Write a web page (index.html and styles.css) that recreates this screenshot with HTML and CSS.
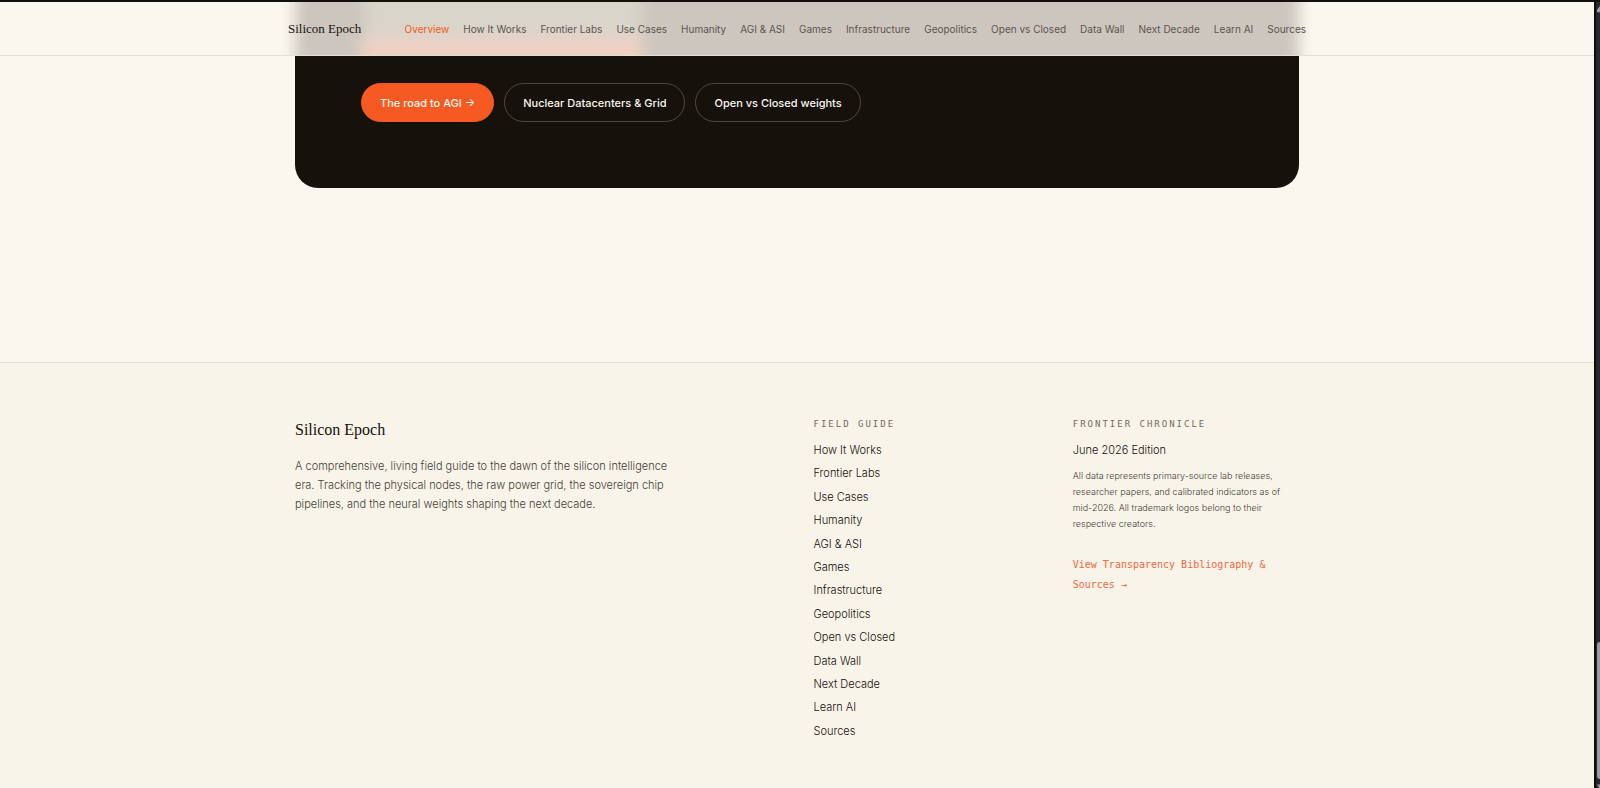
FILE: index.html
```html
<!DOCTYPE html>
<html lang="en">
<head>
<meta charset="utf-8">
<meta name="viewport" content="width=device-width, initial-scale=1">
<title>Silicon Epoch</title>
<link rel="stylesheet" href="styles.css">
</head>
<body>
<div class="window">
  <div class="page">
    <header class="site-header">
      <div class="haze" aria-hidden="true">
        <div class="glow-light"></div>
        <div class="glow-orange"></div>
      </div>
      <div class="header-inner">
        <a class="brand" href="#">Silicon Epoch</a>
        <nav class="site-nav" aria-label="Main">
          <a class="active" href="#">Overview</a>
          <a href="#">How It Works</a>
          <a href="#">Frontier Labs</a>
          <a href="#">Use Cases</a>
          <a href="#">Humanity</a>
          <a href="#">AGI &amp; ASI</a>
          <a href="#">Games</a>
          <a href="#">Infrastructure</a>
          <a href="#">Geopolitics</a>
          <a href="#">Open vs Closed</a>
          <a href="#">Data Wall</a>
          <a href="#">Next Decade</a>
          <a href="#">Learn AI</a>
          <a href="#">Sources</a>
        </nav>
      </div>
    </header>
    <main class="main">
      <section class="hero">
        <div class="actions">
          <a class="button primary" href="#">The road to AGI →</a>
          <a class="button" href="#">Nuclear Datacenters &amp; Grid</a>
          <a class="button" href="#">Open vs Closed weights</a>
        </div>
      </section>
    </main>
    <footer class="site-footer">
      <div class="footer-grid">
        <section class="about">
          <h2 class="footer-brand">Silicon Epoch</h2>
          <p class="about-text">A comprehensive, living field guide to the dawn of the silicon intelligence era. Tracking the physical nodes, the raw power grid, the sovereign chip pipelines, and the neural weights shaping the next decade.</p>
        </section>
        <nav aria-labelledby="guide-title">
          <h3 class="label" id="guide-title">FIELD GUIDE</h3>
          <ul class="guide">
            <li><a href="#">How It Works</a></li>
            <li><a href="#">Frontier Labs</a></li>
            <li><a href="#">Use Cases</a></li>
            <li><a href="#">Humanity</a></li>
            <li><a href="#">AGI &amp; ASI</a></li>
            <li><a href="#">Games</a></li>
            <li><a href="#">Infrastructure</a></li>
            <li><a href="#">Geopolitics</a></li>
            <li><a href="#">Open vs Closed</a></li>
            <li><a href="#">Data Wall</a></li>
            <li><a href="#">Next Decade</a></li>
            <li><a href="#">Learn AI</a></li>
            <li><a href="#">Sources</a></li>
          </ul>
        </nav>
        <section>
          <h3 class="label">FRONTIER CHRONICLE</h3>
          <p class="edition">June 2026 Edition</p>
          <p class="note">All data represents primary-source lab releases, researcher papers, and calibrated indicators as of mid-2026. All trademark logos belong to their respective creators.</p>
          <a class="source-link" href="#">View Transparency Bibliography &amp; Sources →</a>
        </section>
      </div>
    </footer>
  </div>
  <div class="scrollbar" aria-hidden="true">
    <svg class="arrow" viewBox="0 0 5 8"><path d="M0 8V5L4 0H5V8Z" fill="#a0a0a0"/></svg>
    <div class="thumb"></div>
    <svg class="arrow" viewBox="0 0 5 8"><path d="M0 1H5V7H4Z" fill="#a0a0a0"/></svg>
  </div>
</div>
</body>
</html>
```
FILE: styles.css
```css
* { box-sizing: border-box; }
body {
  margin: 0;
  background: #faf7ee;
  color: #16110b;
  font-family: Inter, "Liberation Sans", sans-serif;
}
a { color: inherit; text-decoration: none; }
h2, h3, p, ul { margin: 0; padding: 0; }
ul { list-style: none; }

.window {
  display: flex;
  min-height: 100vh;
  border-top: 2px solid #120f0f;
}
.page {
  flex: 1;
  display: flex;
  flex-direction: column;
}
.site-header {
  position: relative;
  overflow: hidden;
  background: #faf7ee;
  border-bottom: 1px solid #e2dfd3;
}
/* Soft impression of the hero panel passing behind the header */
.haze {
  position: absolute;
  inset: -24px 24px;
  max-width: 1004px;
  margin: 0 auto;
  background: #cdc6bf;
  filter: blur(7px);
}
.glow-light, .glow-orange { position: absolute; }
.glow-light {
  inset: 0 auto 0 70px;
  width: 276px;
  background: #d9d5cb;
}
.glow-orange {
  inset: 60px auto 0 66px;
  width: 282px;
  background: #eed1c3;
}
.header-inner {
  position: relative;
  display: flex;
  align-items: center;
  justify-content: space-between;
  max-width: 1018px;
  height: 53px;
  margin: 0 auto;
}
.brand, .footer-brand {
  font-family: "Liberation Serif", serif;
  font-weight: 400;
}
.brand { font-size: 13px; }
.site-nav {
  display: flex;
  gap: 14px;
  font-size: 10px;
  color: #5c554d;
  white-space: nowrap;
}
.site-nav .active { color: #f65a22; }

.main { padding: 0 24px 174px; }
.hero {
  max-width: 1004px;
  margin: 0 auto;
  padding: 27px 66px 66px;
  background: #16110b;
  border-radius: 0 0 23px 23px;
}
.actions { display: flex; gap: 10px; }
.button {
  display: flex;
  align-items: center;
  height: 39px;
  padding: 0 18px;
  border: 1px solid #4b4742;
  border-radius: 20px;
  color: #faf7ee;
  font-size: 11px;
  font-weight: 500;
}
.primary { background: #f65a22; border-color: #f65a22; }

.site-footer {
  flex: 1;
  padding: 55px 24px 48px;
  background: #f8f4e9;
  border-top: 1px solid #e2dfd3;
}
.footer-grid {
  display: grid;
  grid-template-columns: repeat(4, 1fr);
  gap: 33px;
  max-width: 1004px;
  margin: 0 auto;
}
.about { grid-column: span 2; }
.footer-brand { font-size: 16px; line-height: 24px; }
.about-text {
  max-width: 384px;
  margin-top: 15px;
  font-size: 11px;
  font-weight: 300;
  line-height: 19px;
  color: #443f37;
}
.label, .source-link { font-family: "DejaVu Sans Mono", monospace; }
.label {
  font-size: 9px;
  font-weight: 400;
  line-height: 12px;
  letter-spacing: 2px;
  color: #716c62;
}
.guide {
  display: flex;
  flex-direction: column;
  justify-content: space-between;
  min-height: 304px;
  margin-top: 9px;
}
.guide a, .edition {
  display: block;
  font-size: 11px;
  font-weight: 300;
}
.guide a { line-height: 23px; }
.edition { margin-top: 11px; line-height: 18px; }
.note {
  margin-top: 9px;
  font-size: 9px;
  font-weight: 300;
  line-height: 16px;
  color: #443f37;
}
.source-link {
  display: block;
  margin-top: 23px;
  font-size: 10px;
  line-height: 20px;
  color: #f4683c;
}

.scrollbar {
  display: flex;
  flex-direction: column;
  width: 6px;
  padding: 3px 0 0 1px;
  background: #26282a;
  border-left: 2px solid #0c0c0c;
}
.arrow { display: block; width: 4px; height: 8px; }
.thumb {
  height: 137px;
  margin: auto 0 4px;
  background: #9c9c9e;
  border-radius: 3px 0 0 3px;
}
```
